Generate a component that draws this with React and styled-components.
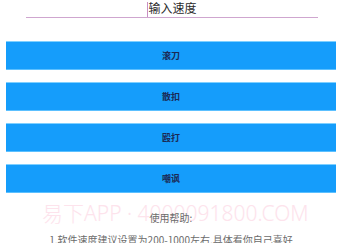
import React from "react";
import styled, { createGlobalStyle } from "styled-components";

const modes = ["滚刀", "散扣", "殴打", "嘲讽"];

const GlobalStyle = createGlobalStyle`
  html, body {
    margin: 0;
    padding: 0;
    background: #fff;
  }
  body {
    font-family: "Noto Sans CJK SC", "Noto Sans", sans-serif;
    overflow: hidden;
  }
  * {
    box-sizing: border-box;
  }
`;

const Page = styled.div`
  position: relative;
  width: 339px;
  height: 243px;
  padding: 0 3px 0 6px;
  overflow: hidden;
  display: flex;
  flex-direction: column;
`;

const SpeedField = styled.div`
  height: 18px;
  margin: 0 18px 0 20px;
  border-bottom: 1px solid #cfa6cf;
  display: flex;
  justify-content: center;
  align-items: flex-start;
  font-size: 12px;
  line-height: 16px;
  color: #2b2b2b;
`;

const Caret = styled.span`
  display: inline-block;
  width: 1px;
  height: 15px;
  margin-top: 2px;
  background: #c98fc4;
`;

const ButtonList = styled.div`
  margin-top: 23px;
  display: flex;
  flex-direction: column;
  gap: 12px;
`;

const ModeButton = styled.button`
  height: 29px;
  width: 100%;
  border: none;
  border-top: 1px solid #7fd0ff;
  border-bottom: 1px solid #5cc0ff;
  background: #159dfb;
  color: #1b2a55;
  font-family: "Noto Sans CJK SC", sans-serif;
  font-size: 9px;
  font-weight: 700;
  padding: 0;
  cursor: pointer;
`;

const Help = styled.div`
  margin-top: 18px;
  display: flex;
  flex-direction: column;
  align-items: center;
  color: #6b6b6b;
  font-size: 10px;
  line-height: 14px;
  gap: 8px;
  position: relative;
  z-index: 1;
`;

const Watermark = styled.div`
  position: absolute;
  left: 42px;
  top: 199px;
  font-family: "Noto Sans", "Noto Sans CJK SC", sans-serif;
  font-weight: 300;
  font-size: 21px;
  line-height: 28px;
  color: #fde3ec;
  white-space: nowrap;
  pointer-events: none;
`;

export default function App() {
  return (
    <>
      <GlobalStyle />
      <Page>
        <SpeedField>
          <Caret />
          输入速度
        </SpeedField>
        <ButtonList>
          {modes.map((m) => (
            <ModeButton key={m}>{m}</ModeButton>
          ))}
        </ButtonList>
        <Watermark>易下APP · 4000091800.COM</Watermark>
        <Help>
          <div>使用帮助:</div>
          <div>1.软件速度建议设置为200-1000左右,具体看你自己喜好</div>
        </Help>
      </Page>
    </>
  );
}
